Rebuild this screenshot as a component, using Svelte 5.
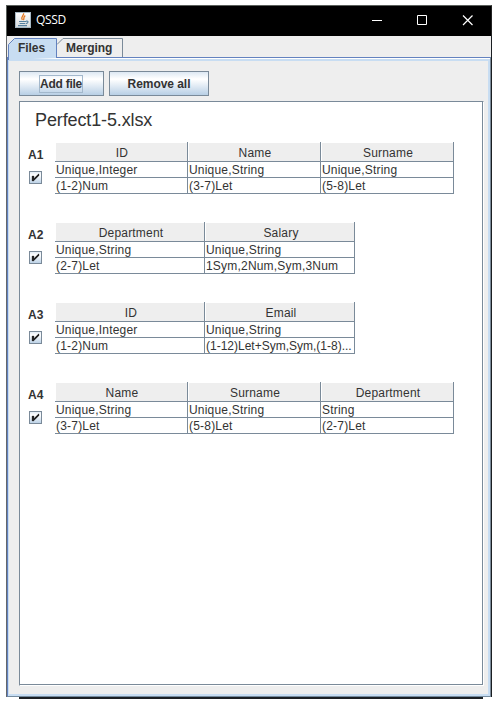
<script>
  const tables = [
    { id: 'A1', widths: [133, 133, 133], columns: [['ID', 'Unique,Integer', '(1-2)Num'], ['Name', 'Unique,String', '(3-7)Let'], ['Surname', 'Unique,String', '(5-8)Let']] },
    { id: 'A2', widths: [150, 150], columns: [['Department', 'Unique,String', '(2-7)Let'], ['Salary', 'Unique,String', '1Sym,2Num,Sym,3Num']] },
    { id: 'A3', widths: [150, 150], columns: [['ID', 'Unique,Integer', '(1-2)Num'], ['Email', 'Unique,String', '(1-12)Let+Sym,Sym,(1-8)...']] },
    { id: 'A4', widths: [133, 133, 133], columns: [['Name', 'Unique,String', '(3-7)Let'], ['Surname', 'Unique,String', '(5-8)Let'], ['Department', 'String', '(2-7)Let']] }
  ];
</script>

<main>
  <div class="window">
    <header class="titlebar">
      <svg class="java" width="16" height="16" viewBox="0 0 16 16">
        <defs><linearGradient id="jg" x1="0" y1="0" x2="0" y2="1"><stop offset="0" stop-color="#fff" /><stop offset="1" stop-color="#d5dadd" /></linearGradient></defs>
        <rect x=".5" y=".5" width="15" height="15" fill="url(#jg)" stroke="#a7b8c4" />
        <path d="M8.6 1.300C9.300 3.800 5 4.600 7.300 8M10.300 3.600C7.800 4.900 9.700 6.200 8.300 8" fill="none" stroke="#e5771e" stroke-width="1.300" />
        <path d="M4 9.500h7M4.600 11.500h5.400M3 13.600h9M11 9.200c3-.6 2.400 2.200-.3 2.400" fill="none" stroke="#55809f" stroke-width="1.100" />
      </svg>
      <span class="title">QSSD</span>
      <svg class="controls" width="104" height="12" viewBox="0 0 104 12" fill="none" stroke="#fff">
        <path d="M0 5.5H10M45.5 .5h9v9h-9z" />
        <path d="M91 .5l9.5 9.5M100.500 .5L91 10" stroke-width="1.2" />
      </svg>
    </header>
    <nav class="tabs">
      <div class="tab active">
        <svg width="49" height="22" viewBox="0 0 49 22"><path d="M.5 22V6.500L6.500 .5H48.500V20" fill="#c8ddf2" stroke="#6382bf" /></svg>
        <span>Files</span>
      </div>
      <div class="tab merging">
        <svg width="66" height="19" viewBox="0 0 66 19"><path d="M0 6.500L6 .5H65.500V19" fill="none" stroke="#7a8a99" /></svg>
        <span>Merging</span>
      </div>
    </nav>
    <section class="content">
      <div class="buttons">
        <button class="add"><span class="focus">Add file</span></button>
        <button class="remove"><span>Remove all</span></button>
      </div>
      <div class="panel">
        <h1><span>Perfect1-5.xlsx</span></h1>
        {#each tables as t}
          <div class="entry">
            <div class="side">
              <b>{t.id}</b>
              <svg width="13" height="13" viewBox="0 0 13 13" shape-rendering="crispEdges">
                <defs><linearGradient id="c{t.id}" x1="0" y1="0" x2="0" y2="1"><stop offset="0" stop-color="#dde8f3" /><stop offset=".3" stop-color="#fff" /><stop offset="1" stop-color="#b8cfe5" /></linearGradient></defs>
                <rect x=".5" y=".5" width="12" height="12" fill="url(#c{t.id})" stroke="#7a8a99" />
                <path d="M3 5h2v5h-2zM5 7h1v2h-1zM6 6h1v2h-1zM7 5h1v2h-1zM8 4h1v2h-1zM9 3h1v2h-1z" fill="#222" stroke="#222" stroke-width=".3" shape-rendering="auto" />
              </svg>
            </div>
            <div class="grid">
              {#each t.columns as col, i}
                <div class="col" style="width:{t.widths[i]}px">
                  <div class="head"><span>{col[0]}</span></div>
                  <div class="cell">{col[1]}</div>
                  <div class="cell" class:long={col[2].length > 20}>{col[2]}</div>
                </div>
              {/each}
            </div>
          </div>
        {/each}
      </div>
    </section>
  </div>
  <div class="shadow"></div>
</main>

<style>
  :global(body) { background: #fff; }
  main { box-sizing: border-box; width: 501px; height: 709px; padding: 5px 0 0 6px; overflow: hidden; font: 12px/16px "Liberation Sans", Arial, sans-serif; color: #333; }
  main :global(*) { box-sizing: border-box; }
  .window { width: 486px; height: 692px; background: #eee; border-left: 1px solid #65686b; border-right: 1px solid #1a1e22; display: flex; flex-direction: column; }
  .titlebar { height: 31px; flex: none; margin: 0 -1px; padding-left: 10px; background: #000; border: 1px solid #5a5f5b; border-bottom: 0; border-right-color: #222; display: flex; align-items: flex-start; color: #fff; }
  .java { margin: 6px 0 0 -2px; }
  .title { font: 12px/16px "Open Sans", "Noto Sans", sans-serif; margin: 6px 0 0 5px; width: 40px; letter-spacing: -.3px; }
  .controls { margin: 9px 0 0 296px; }
  .tabs { height: 21px; padding-top: 2px; display: flex; flex: none; }
  .tab { position: relative; height: 19px; font-weight: bold; }
  .tab svg { display: block; }
  .tab span { position: absolute; top: 2px; left: 10px; white-space: nowrap; letter-spacing: -.05px; }
  .active { width: 49px; z-index: 1; margin-left: 1px; }
  .merging { width: 66px; }
  .merging span { left: 9px; }
  .content { height: 640px; flex: none; border: 1px solid #6382bf; border-bottom-color: #748b9f; border-right-color: #7a8a99; box-shadow: inset 0 1px #fff, inset 0 3px #c8ddf2, inset 1px 0 #c8ddf2, inset -2px -2px #c8ddf2; padding: 13px 7px 10px 11px; }
  .buttons { display: flex; gap: 5px; height: 30px; }
  button { height: 25px; padding: 0; border: 1px solid #7a8a99; background: linear-gradient(#dde8f3 0, #fff 30%, #fff 32%, #b8cfe5 100%); font: bold 12px/16px "Liberation Sans", Arial, sans-serif; color: #333; display: flex; align-items: center; justify-content: center; }
  .add { width: 85px; padding-right: 1px; }
  .remove { width: 100px; }
  .remove span { letter-spacing: -.05px; }
  .focus { border: 1px solid #a3b8cc; width: 44px; height: 18px; white-space: nowrap; letter-spacing: -.25px; text-align: left; }
  .panel { width: 465px; height: 585px; border: 1px solid #7a8a99; border-right: 1px solid #fff; border-bottom: 1px solid #fff; background: #fff; box-shadow: inset -1px -1px #7a8a99; }
  h1 { margin: 0; height: 40px; padding: 6px 0 0 15px; font-size: 18px; line-height: 24px; font-weight: normal; letter-spacing: -.12px; }
  .entry { height: 80px; display: flex; }
  .side { width: 35px; padding: 5px 0 0 8px; }
  .side b { display: block; height: 24px; }
  .side svg { display: block; margin-left: 1px; }
  .grid { display: flex; }
  .head { height: 20px; padding: 1px 0 0 1px; border-right: 1px solid #7a8a99; border-bottom: 1px solid #7a8a99; text-align: center; letter-spacing: .2px; }
  .head span { display: block; height: 18px; line-height: 20px; padding-left: 1px; background: #eee; }
  .col:first-child:nth-last-child(2) .head span { padding-left: 2px; }
  .col:last-child:nth-child(2) .head span { padding-left: 2px; }
  .cell { height: 16px; line-height: 16px; padding-left: 1px; border-right: 1px solid #7a8a99; border-bottom: 1px solid #7a8a99; white-space: nowrap; letter-spacing: .2px; }
  .long { letter-spacing: 0; }
  .shadow { width: 464px; height: 2px; margin-left: 13px; background: #1c2024; }
</style>
